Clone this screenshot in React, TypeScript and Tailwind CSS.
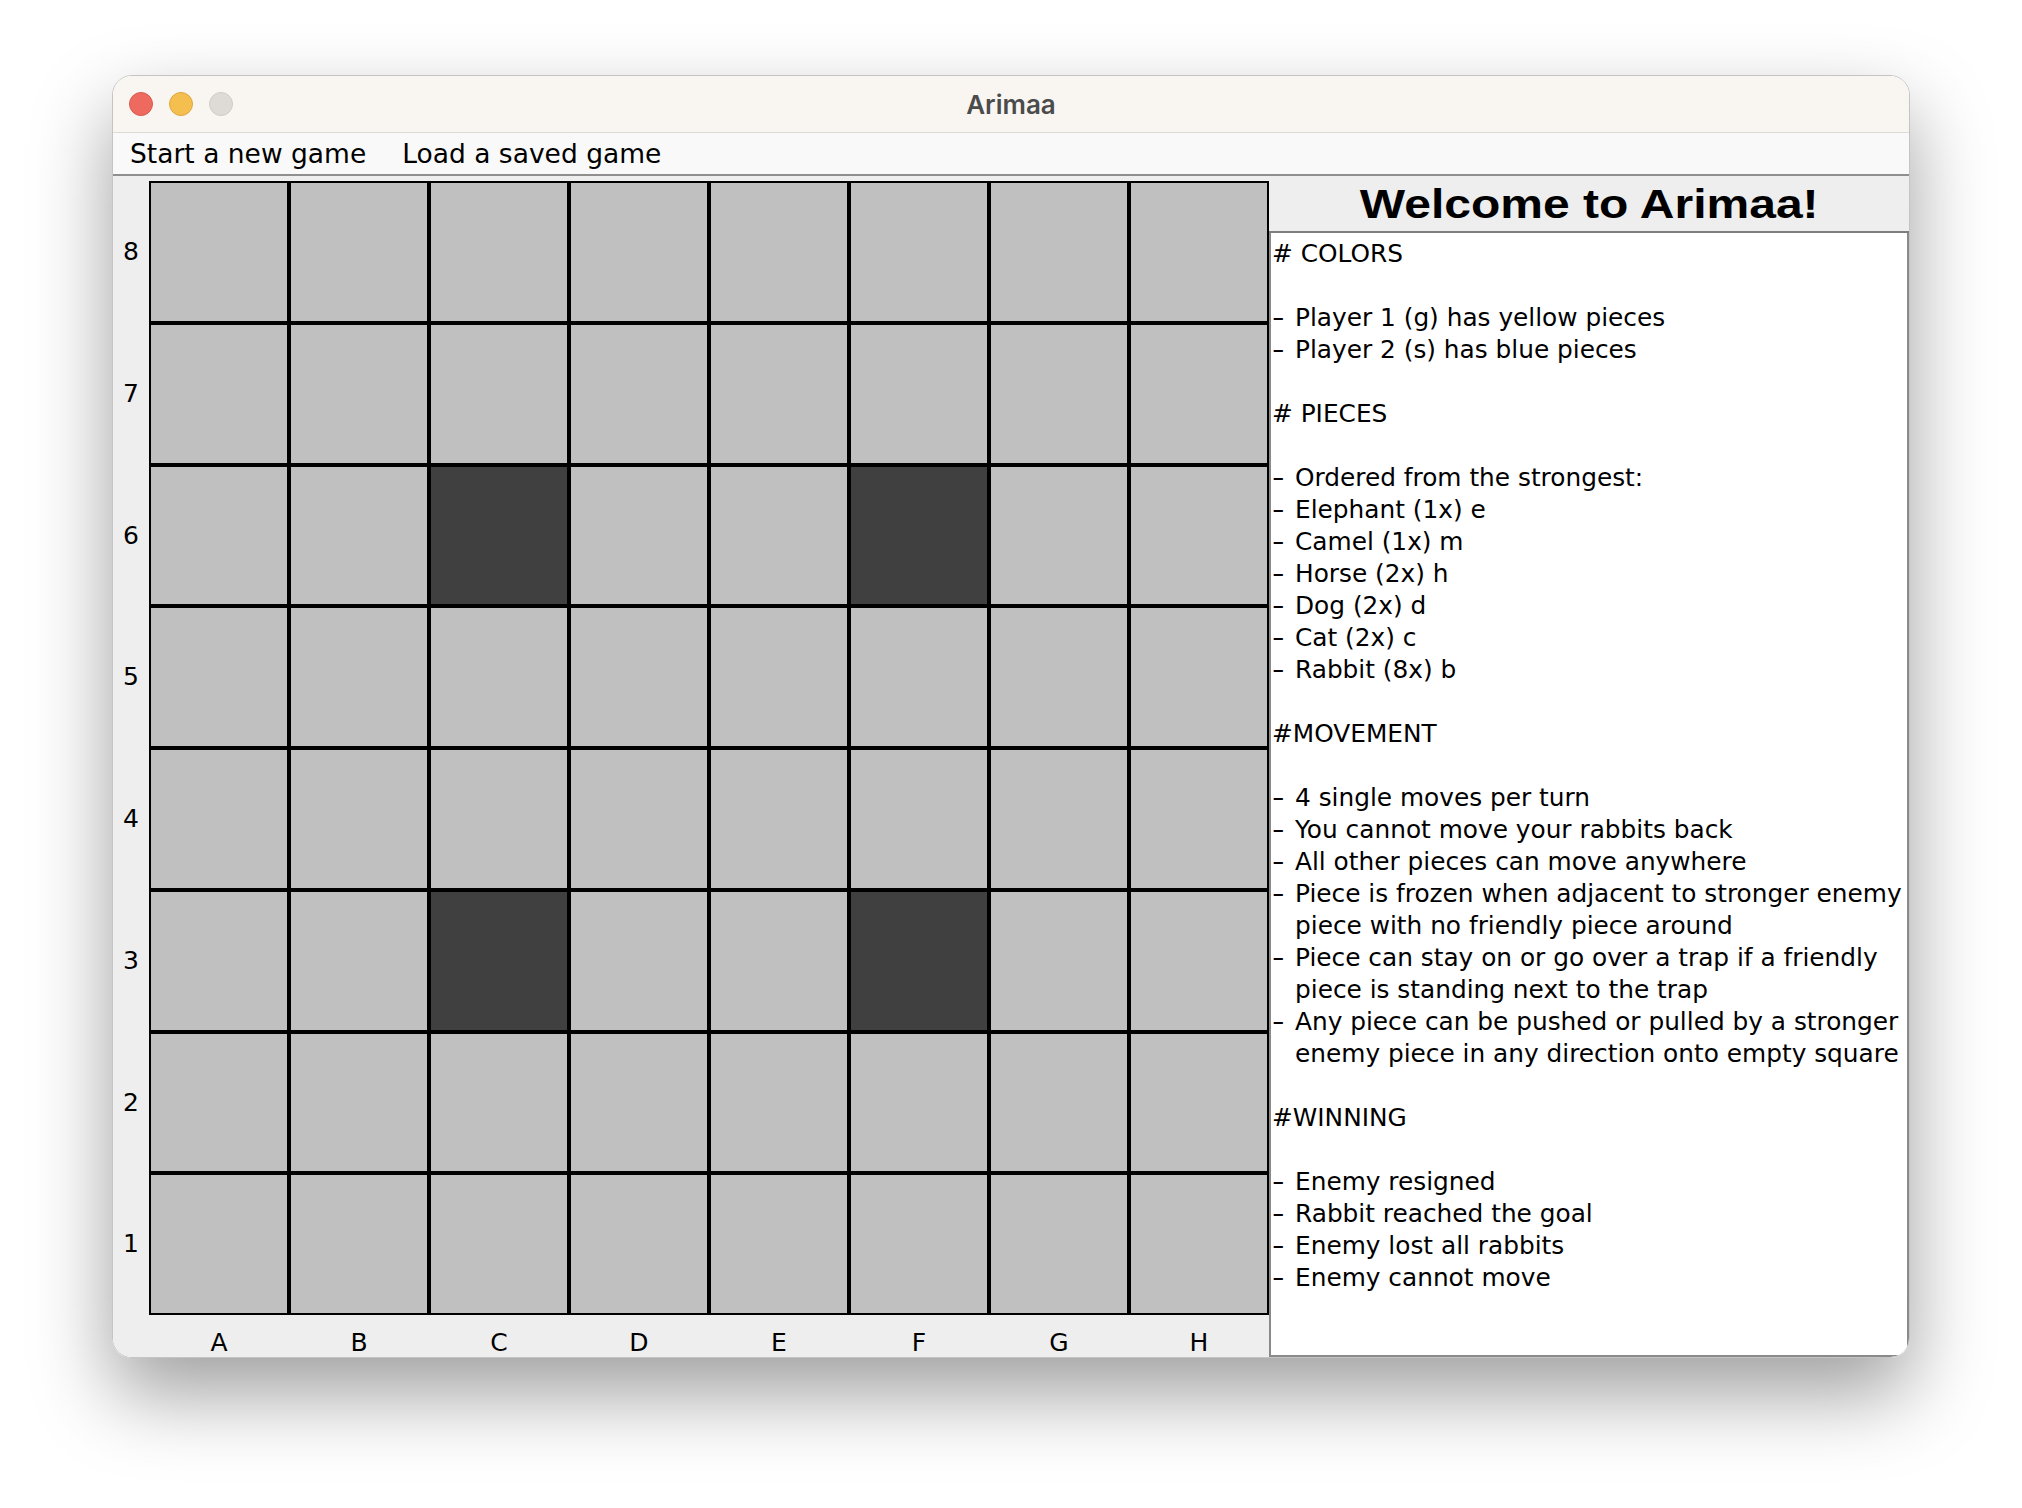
const rows = [8, 7, 6, 5, 4, 3, 2, 1]
const cols = ['A', 'B', 'C', 'D', 'E', 'F', 'G', 'H']
const traps = ['C6', 'F6', 'C3', 'F3']

type Line = { kind: 'head' | 'item' | 'cont' | 'blank'; text?: string }

const rules: Line[] = [
  { kind: 'head', text: '# COLORS' },
  { kind: 'blank' },
  { kind: 'item', text: 'Player 1 (g) has yellow pieces' },
  { kind: 'item', text: 'Player 2 (s) has blue pieces' },
  { kind: 'blank' },
  { kind: 'head', text: '# PIECES' },
  { kind: 'blank' },
  { kind: 'item', text: 'Ordered from the strongest:' },
  { kind: 'item', text: 'Elephant (1x) e' },
  { kind: 'item', text: 'Camel (1x) m' },
  { kind: 'item', text: 'Horse (2x) h' },
  { kind: 'item', text: 'Dog (2x) d' },
  { kind: 'item', text: 'Cat (2x) c' },
  { kind: 'item', text: 'Rabbit (8x) b' },
  { kind: 'blank' },
  { kind: 'head', text: '#MOVEMENT' },
  { kind: 'blank' },
  { kind: 'item', text: '4 single moves per turn' },
  { kind: 'item', text: 'You cannot move your rabbits back' },
  { kind: 'item', text: 'All other pieces can move anywhere' },
  { kind: 'item', text: 'Piece is frozen when adjacent to stronger enemy' },
  { kind: 'cont', text: 'piece with no friendly piece around' },
  { kind: 'item', text: 'Piece can stay on or go over a trap if a friendly' },
  { kind: 'cont', text: 'piece is standing next to the trap' },
  { kind: 'item', text: 'Any piece can be pushed or pulled by a stronger' },
  { kind: 'cont', text: 'enemy piece in any direction onto empty square' },
  { kind: 'blank' },
  { kind: 'head', text: '#WINNING' },
  { kind: 'blank' },
  { kind: 'item', text: 'Enemy resigned' },
  { kind: 'item', text: 'Rabbit reached the goal' },
  { kind: 'item', text: 'Enemy lost all rabbits' },
  { kind: 'item', text: 'Enemy cannot move' },
]

function RuleLine({ line }: { line: Line }) {
  if (line.kind === 'blank') return <div className="h-[32px]" />
  if (line.kind === 'head') return <div className="h-[32px] whitespace-pre">{line.text}</div>
  if (line.kind === 'cont') return <div className="h-[32px] pl-[23px] whitespace-pre">{line.text}</div>
  return (
    <div className="h-[32px] flex whitespace-pre">
      <span className="w-[23px] shrink-0 scale-x-[1.4] origin-left">-</span>
      <span>{line.text}</span>
    </div>
  )
}

export default function App() {
  return (
    <div className="min-h-screen bg-white pt-[75px] pl-[112px]">
      <div className="w-[1798px] h-[1283px] rounded-[20px] overflow-hidden flex flex-col border border-[#c4c4c4] shadow-[0_36px_80px_rgba(0,0,0,0.38)]">
        {/* title bar */}
        <div className="relative h-[57px] shrink-0 bg-[#f9f6f2] border-b border-[#dedbd7] flex items-center pl-[16px] gap-[16px]">
          <div className="w-6 h-6 rounded-full bg-[#ee6a5f] border border-[#d85a50]" />
          <div className="w-6 h-6 rounded-full bg-[#f5bf4f] border border-[#dba73f]" />
          <div className="w-6 h-6 rounded-full bg-[#dedbd7] border border-[#cfccc8]" />
          <div className="absolute inset-0 flex items-center justify-center pointer-events-none">
            <span className="text-[26px] font-semibold text-[#4b4b4b] font-['Inter',sans-serif]">Arimaa</span>
          </div>
        </div>

        {/* menu bar */}
        <div className="h-[43px] shrink-0 bg-[#f9f9f9] border-b-2 border-[#8f8f8f] flex items-center font-['DejaVu_Sans',sans-serif] text-[26.5px] text-black">
          <span className="pl-[17px] pr-[18px]">Start a new game</span>
          <span className="px-[18px]">Load a saved game</span>
        </div>

        {/* content */}
        <div className="flex flex-1 min-h-0 bg-[#eeeeee] font-['DejaVu_Sans',sans-serif] text-black">
          <div className="w-[1156px] shrink-0 flex flex-col pt-[5px]">
            <div className="flex">
              <div className="w-[36px] h-[1134px] flex flex-col">
                {rows.map(r => (
                  <div key={r} className="flex-1 flex items-center justify-center text-[25px]">{r}</div>
                ))}
              </div>
              <div className="w-[1120px] h-[1134px] grid grid-cols-8 grid-rows-8">
                {rows.map(r =>
                  cols.map(c => (
                    <div
                      key={c + r}
                      className={traps.includes(c + r) ? 'border-2 border-black bg-[#404040]' : 'border-2 border-black bg-[#c0c0c0]'}
                    />
                  ))
                )}
              </div>
            </div>
            <div className="flex pl-[36px] h-[43px]">
              <div className="w-[1120px] grid grid-cols-8 pt-[9px]">
                {cols.map(c => (
                  <div key={c} className="flex items-center justify-center text-[25px]">{c}</div>
                ))}
              </div>
            </div>
          </div>

          <div className="flex-1 flex flex-col min-w-0">
            <div className="h-[57px] shrink-0 bg-[#eeeeee] border-b-2 border-[#7f7f7f] flex items-center justify-center">
              <span className="inline-block scale-x-[1.2] font-['Liberation_Sans',Arial,sans-serif] font-bold text-[40px] leading-none">
                Welcome to Arimaa!
              </span>
            </div>
            <div className="flex-1 bg-white border-x-2 border-b-2 border-[#8a8a8a] pl-[1px] pt-[5px] text-[24.8px] leading-[32px]">
              {rules.map((line, i) => (
                <RuleLine key={i} line={line} />
              ))}
            </div>
          </div>
        </div>
      </div>
    </div>
  )
}
